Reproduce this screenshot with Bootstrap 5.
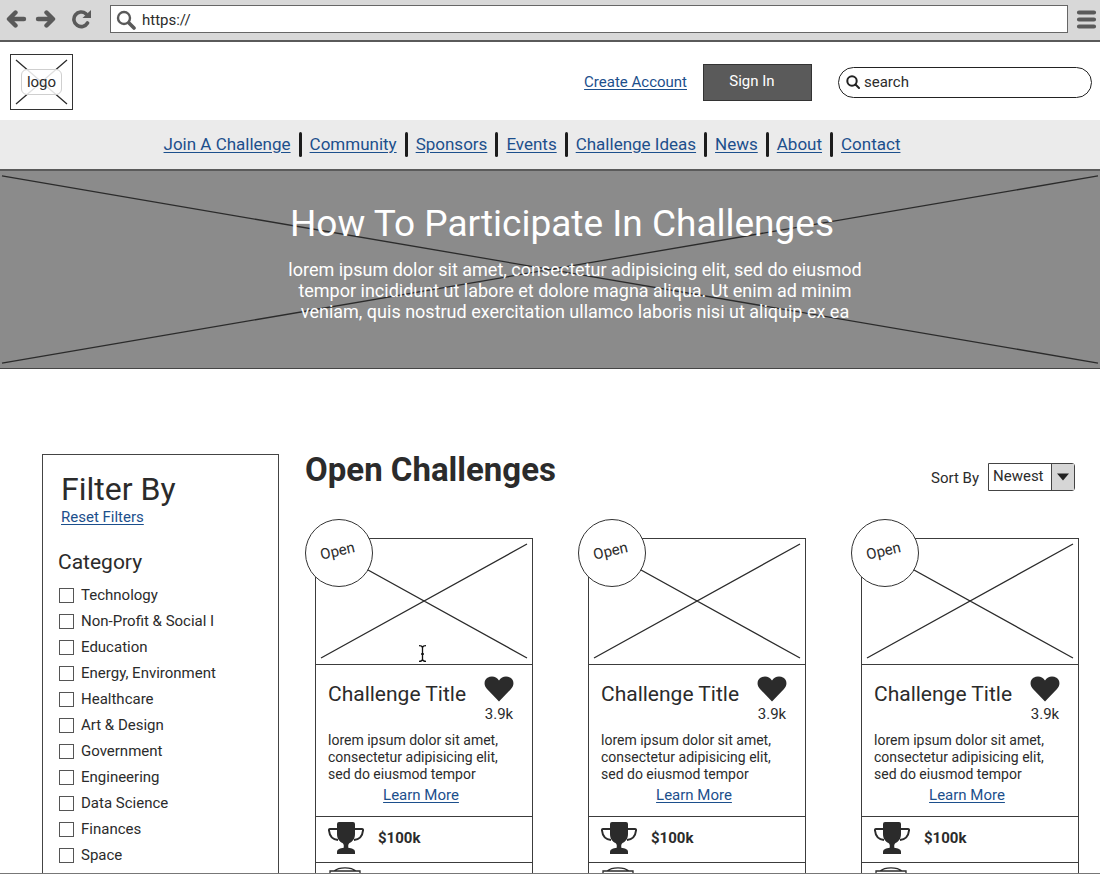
<!DOCTYPE html>
<html lang="en">
<head>
<meta charset="utf-8">
<meta name="viewport" content="width=device-width, initial-scale=1">
<title>Challenges</title>
<link href="https://cdn.jsdelivr.net/npm/bootstrap@5.3.0/dist/css/bootstrap.min.css" rel="stylesheet">
<style>
  :root { --ink: #2b2b2b; --chrome: #5a5a5a; --link: #1c4f8c; }
  body { font-family: Roboto, "Liberation Sans", sans-serif; font-size: 15px; line-height: 20px; color: var(--ink); background: #fff; }
  a { color: var(--link); text-underline-offset: 2px; }
  a:hover { color: #0f3565; }
  svg { display: block; flex-shrink: 0; }

  .window { border-bottom: 1px solid #777; }
  .browser-bar { background: #d8d8d8; border-bottom: 2px solid var(--chrome); padding: 5px 3px 7px 6px; color: var(--chrome); }
  .tool-btn { border: 0; background: none; padding: 0; color: inherit; }
  .address { background: #fff; border: 1px solid #666; height: 28px; padding: 1px 0 0 5px; margin-left: 18px; gap: 6px; }
  .bare-input { border: 0; outline: 0; background: transparent; padding: 0; min-width: 0; color: var(--ink); }
  .bare-input::placeholder { color: var(--ink); opacity: 1; }

  .site-header { padding: 12px 8px 10px 10px; }
  .logo-box { width: 63px; height: 56px; border: 1px solid #333; color: var(--ink); }
  .logo-box:hover { color: var(--ink); }
  .logo-tag { background: rgba(255, 255, 255, .85); border: 1px solid #cfcfcf; border-radius: 6px; padding: 2px 5px; }
  .sign-in { width: 109px; height: 37px; margin: 0 26px 0 16px; padding: 0 11px 3px 0; background: var(--chrome); border: 1px solid #333; color: #fff; }
  .search-pill { width: 254px; height: 31px; border: 1px solid #222; border-radius: 16px; padding-left: 7px; gap: 4px; }

  .site-nav { background: #ebebeb; border-bottom: 2px solid var(--chrome); padding: 12px 36px 12px 0; font-size: 17px; line-height: 24px; }
  .site-nav li + li::before { content: ""; width: 3px; height: 25px; margin: 0 8px; border-radius: 2px; background: #1c1c1c; }

  .hero { background: #8b8b8b; border-bottom: 1px solid #444; color: #fff; padding: 29px 0 46px 24px; }
  .hero h1 { font-size: 37px; line-height: 48px; font-weight: 400; margin-bottom: 11px; }
  .hero p { font-size: 18px; line-height: 21px; padding-left: 26px; }
  .hero > svg { position: absolute; inset: 0; width: 100%; height: 100%; }

  .content-area { padding: 85px 21px 0 42px; gap: 26px; }
  .filters { width: 237px; border: 1px solid #444; padding: 14px 15px 20px; }
  .filters h2 { font-size: 32px; line-height: 40px; font-weight: 400; margin: 0 0 0 3px; }
  .filters .reset { margin: -2px 0 0 3px; }
  .filters h3 { font-size: 21px; line-height: 26px; font-weight: 400; margin: 22px 0 7px; }
  .check-row { height: 26px; gap: 7px; padding-left: 1px; }
  .check-row .form-check-input { width: 15px; height: 15px; margin: 0; border: 1px solid #555; border-radius: 0; }

  .list-head { padding-right: 4px; margin-bottom: 47px; }
  .list-head h2 { font-size: 33px; line-height: 36px; font-weight: 700; margin: -2px 0 3px; }
  .sort-by { margin-top: 9px; }
  .sort-by label { padding-top: 2px; }
  .sort-box { width: 87px; height: 28px; border: 1px solid #444; border-radius: 0 3px 3px 0; margin-left: 9px; }
  .sort-box select { appearance: none; border: 0; background: #fff; color: var(--ink); padding: 0 0 2px 4px; }
  .sort-arrow { position: absolute; top: 0; right: 0; bottom: 0; width: 23px; background: #d6d6d6; border-left: 1px solid #444; pointer-events: none; }

  .card-grid { display: grid; grid-template-columns: repeat(auto-fill, minmax(200px, 1fr)); gap: 55px; padding-left: 10px; }
  .challenge { border: 1px solid #3c3c3c; }
  .thumb { height: 126px; border-bottom: 1px solid #3c3c3c; }
  .thumb > svg { width: 100%; height: 100%; }
  .open-badge { position: absolute; left: -11px; top: -20px; width: 68px; height: 68px; border: 1px solid #333; border-radius: 50%; background: #fff; padding: 0 4px 5px 0; }
  .open-badge span { transform: rotate(-13deg); }
  .text-cursor { position: absolute; left: 47%; bottom: 2px; }
  .summary { padding: 11px 12px 11px; }
  .summary h3 { font-size: 21px; line-height: 26px; font-weight: 400; margin: 5px 0 0; }
  .likes { width: 30px; margin-right: 6px; }
  .likes svg { margin-bottom: 2px; }
  .summary p { font-size: 14px; line-height: 17px; margin: 8px 0 2px; }
  .learn { padding-right: 6px; }
  .fact { height: 46px; border-top: 1px solid #3c3c3c; padding: 0 12px 3px; gap: 14px; }
</style>
</head>
<body>
<svg class="d-none" aria-hidden="true">
  <symbol id="heart" viewBox="0 0 30 26"><path fill="currentColor" d="M15 25.500 3 13C-.8 9 .2 3.700 3.500 1.700 7.500-.7 12.500.3 15 4.500 17.500.3 22.500-.7 26.500 1.700 29.800 3.700 30.800 9 27 13Z"/></symbol>
  <symbol id="trophy" viewBox="0 0 36 34"><path fill="currentColor" d="M9 3Q9 1 11 1H25Q27 1 27 3V13C27 18 24.500 20.500 21.500 22 20 23 20 25 20.500 27 23.500 27 27 28 27 31V33H9V31C9 28 12.500 27 15.500 27 16 25 16 23 14.500 22 11.500 20.500 9 18 9 13Z"/><path fill="none" stroke="currentColor" stroke-width="2" d="M9.500 8H2Q.8 8 1 9.500C1.500 14.500 4.500 18.500 10 19M26.500 8H34Q35.200 8 35 9.500C34.500 14.500 31.500 18.500 26 19"/></symbol>
  <symbol id="jar" viewBox="0 0 34 34"><g fill="none" stroke="currentColor" stroke-width="1.300"><path d="M6 4C11-.3 23-.3 28 4M2 4H32V12H2Z"/><path d="M4 12V33H30V12"/></g></symbol>
</svg>

<div class="window vh-100 d-flex flex-column overflow-hidden">
  <div class="browser-bar d-flex align-items-center flex-shrink-0">
    <button class="tool-btn" aria-label="Back"><svg width="21" height="22" viewBox="0 0 21 22" fill="none" stroke="currentColor" stroke-width="4.400" stroke-linecap="round" stroke-linejoin="round"><path d="M18 11H4M9.500 4.500 3 11 9.500 17.500"/></svg></button>
    <button class="tool-btn ms-2" aria-label="Forward"><svg width="21" height="22" viewBox="0 0 21 22" fill="none" stroke="currentColor" stroke-width="4.400" stroke-linecap="round" stroke-linejoin="round"><path d="M3 11H17M11.500 4.500 18 11 11.500 17.500"/></svg></button>
    <button class="tool-btn ms-3" aria-label="Reload"><svg width="20" height="22" viewBox="0 0 20 22"><path d="M14 5.800A7.300 7.300 0 1 0 15.500 15" fill="none" stroke="currentColor" stroke-width="3.600" stroke-linecap="round"/><path d="M19 2V10H10.500Z" fill="currentColor"/></svg></button>
    <div class="address d-flex align-items-center flex-grow-1">
      <svg width="20" height="20" viewBox="0 0 20 20" fill="none" stroke="currentColor"><circle cx="8" cy="8" r="6" stroke-width="2.400"/><path d="m13 13 5 5" stroke-width="3.600" stroke-linecap="round"/></svg>
      <input class="bare-input flex-grow-1" type="text" value="https://" aria-label="Address">
    </div>
    <button class="tool-btn ms-2" aria-label="Menu"><svg width="21" height="22" viewBox="0 0 21 22" stroke="currentColor" stroke-width="4.200" stroke-linecap="round"><path d="M3 4.500H18M3 11.500H18M3 18.500H18"/></svg></button>
  </div>

  <header class="site-header d-flex align-items-center flex-shrink-0">
    <a href="#" class="logo-box position-relative d-flex align-items-center justify-content-center text-decoration-none">
      <svg class="position-absolute top-0 start-0 w-100 h-100" viewBox="0 0 61 54" preserveAspectRatio="none" stroke="#2b2b2b" stroke-width="1.300"><path d="M5 5 56 49M56 5 5 49"/></svg>
      <span class="logo-tag position-relative">logo</span>
    </a>
    <a href="#" class="ms-auto">Create Account</a>
    <button class="sign-in">Sign In</button>
    <label class="search-pill d-flex align-items-center">
      <svg width="14" height="14" viewBox="0 0 14 14" fill="none" stroke="#222" stroke-width="2"><circle cx="6" cy="6" r="4.700"/><path d="m9.500 9.500 3.500 3.500" stroke-linecap="round"/></svg>
      <input class="bare-input flex-grow-1" type="text" placeholder="search" aria-label="Search">
    </label>
  </header>

  <nav class="site-nav flex-shrink-0">
    <ul class="list-unstyled d-flex justify-content-center mb-0">
      <li class="d-flex"><a href="#">Join A Challenge</a></li>
      <li class="d-flex"><a href="#">Community</a></li>
      <li class="d-flex"><a href="#">Sponsors</a></li>
      <li class="d-flex"><a href="#">Events</a></li>
      <li class="d-flex"><a href="#">Challenge Ideas</a></li>
      <li class="d-flex"><a href="#">News</a></li>
      <li class="d-flex"><a href="#">About</a></li>
      <li class="d-flex"><a href="#">Contact</a></li>
    </ul>
  </nav>

  <section class="hero position-relative text-center flex-shrink-0">
    <svg viewBox="0 0 1100 198" preserveAspectRatio="none" stroke="#2b2b2b" stroke-width="1.300"><path d="M2 5 1098 193M1098 5 2 193"/></svg>
    <h1 class="position-relative">How To Participate In Challenges</h1>
    <p class="position-relative mb-0">lorem ipsum dolor sit amet, consectetur adipisicing elit, sed do eiusmod<br>tempor incididunt ut labore et dolore magna aliqua. Ut enim ad minim<br>veniam, quis nostrud exercitation ullamco laboris nisi ut aliquip ex ea</p>
  </section>

  <main class="content-area d-flex align-items-start">
    <aside class="filters flex-shrink-0">
      <h2>Filter By</h2>
      <div class="reset"><a href="#">Reset Filters</a></div>
      <h3>Category</h3>
      <div id="categories"></div>
    </aside>

    <div class="flex-grow-1">
      <div class="list-head d-flex align-items-start">
        <h2>Open Challenges</h2>
        <div class="sort-by d-flex align-items-center ms-auto">
          <label for="sort">Sort By</label>
          <div class="sort-box position-relative">
            <select id="sort" class="w-100 h-100"><option>Newest</option><option>Oldest</option></select>
            <span class="sort-arrow d-flex align-items-center justify-content-center"><svg width="12" height="8" viewBox="0 0 12 8"><path fill="#222" d="M0 .5H12L6 7.500Z"/></svg></span>
          </div>
        </div>
      </div>
      <div class="card-grid" id="cards"></div>
    </div>
  </main>
</div>

<template id="card-template">
  <article class="challenge position-relative">
    <div class="thumb position-relative">
      <svg viewBox="0 0 216 125" preserveAspectRatio="none" stroke="#2b2b2b" stroke-width="1.300"><path d="M5 119 211 5M5 5 211 119"/></svg>
    </div>
    <div class="open-badge d-flex align-items-center justify-content-center"><span>Open</span></div>
    <div class="summary">
      <div class="d-flex justify-content-between">
        <h3>Challenge Title</h3>
        <div class="likes text-center"><svg width="30" height="26"><use href="#heart"/></svg>3.9k</div>
      </div>
      <p>lorem ipsum dolor sit amet,<br>consectetur adipisicing elit,<br>sed do eiusmod tempor</p>
      <div class="learn text-center"><a href="#">Learn More</a></div>
    </div>
    <div class="fact d-flex align-items-center"><svg width="36" height="34"><use href="#trophy"/></svg><strong>$100k</strong></div>
    <div class="fact d-flex align-items-center"><svg width="34" height="36"><use href="#jar"/></svg></div>
  </article>
</template>

<script src="https://cdn.jsdelivr.net/npm/bootstrap@5.3.0/dist/js/bootstrap.bundle.min.js"></script>
<script>
  const categories = ["Technology", "Non-Profit & Social I", "Education", "Energy, Environment", "Healthcare", "Art & Design", "Government", "Engineering", "Data Science", "Finances", "Space", "Information"];
  const list = document.getElementById("categories");
  categories.forEach(name => {
    const row = document.createElement("label");
    row.className = "check-row d-flex align-items-center";
    const box = document.createElement("input");
    box.type = "checkbox";
    box.className = "form-check-input";
    row.append(box, name);
    list.append(row);
  });

  const cards = document.getElementById("cards");
  const template = document.getElementById("card-template");
  for (let i = 0; i < 3; i++) cards.append(template.content.cloneNode(true));
  cards.querySelector(".thumb").insertAdjacentHTML("beforeend",
    '<svg class="text-cursor" style="width:9px;height:17px" viewBox="0 0 9 17" fill="none" stroke="#111" stroke-width="1.300"><path d="M1 .7Q4 .7 4.500 2.500 5 .7 8 .7M4.500 2.500V14.500M1 16.300Q4 16.300 4.500 14.500 5 16.300 8 16.300M3 9H6"/></svg>');
</script>
</body>
</html>
